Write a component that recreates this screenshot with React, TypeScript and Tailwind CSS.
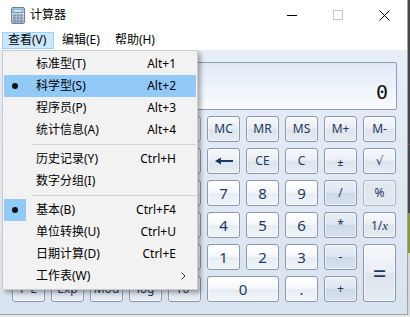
import React from "react";

const TXT = "text-[#1e395b]";

type Kind = "mem" | "num" | "op" | "pct" | "grp";

const KIND: Record<Kind, string> = {
  mem: "border-[#8a99ad] bg-[linear-gradient(to_bottom,#f6f8fb_0%,#e9eef5_49%,#dce4ee_51%,#e6ecf3_100%)]",
  num: "border-[#8a99ad] bg-[linear-gradient(to_bottom,#ffffff_0%,#f4f7fb_49%,#e7edf4_51%,#f0f4f9_100%)]",
  op: "border-[#8a99ad] bg-[linear-gradient(to_bottom,#e9eff7_0%,#dde6f0_49%,#cdd9e7_51%,#d8e2ed_100%)]",
  pct: "border-[#aab6c4] bg-[#e1e8f0]",
  grp: "border-[#a3b0c0] bg-[#e4ebf4]",
};

function Btn({
  children,
  kind = "mem",
  cls = "",
}: {
  children?: React.ReactNode;
  kind?: Kind;
  cls?: string;
}) {
  return (
    <div
      className={
        "flex items-center justify-center rounded-[3px] border shadow-[inset_0_0_0_1px_rgba(255,255,255,0.55)] " +
        TXT +
        " " +
        KIND[kind] +
        " " +
        cls
      }
    >
      {children}
    </div>
  );
}

const L = "text-[12px] leading-none";
const D = "text-[15px] leading-none";

function CalcIcon() {
  return (
    <svg width="14" height="17" viewBox="0 0 14 17">
      <defs>
        <linearGradient id="cb" x1="0" y1="0" x2="0" y2="1">
          <stop offset="0" stopColor="#e6edf5" />
          <stop offset="1" stopColor="#a9bbcf" />
        </linearGradient>
      </defs>
      <rect x="0.5" y="0.5" width="13" height="16" rx="1.5" fill="url(#cb)" stroke="#6c819a" />
      <rect x="2" y="2" width="10" height="3.5" fill="#c3e3fa" stroke="#5b86b2" strokeWidth="0.8" />
      {[0, 1, 2].map((r) =>
        [0, 1, 2].map((c) => (
          <rect
            key={r + "-" + c}
            x={2.2 + c * 3.4}
            y={7.4 + r * 2.9}
            width="2.6"
            height="2.1"
            fill="#7890aa"
          />
        ))
      )}
    </svg>
  );
}

function BackArrow() {
  return (
    <svg width="18" height="8" viewBox="0 0 18 8">
      <polygon points="0,4 6,0.5 6,7.5" fill="#1e395b" />
      <rect x="5" y="3" width="13" height="2" fill="#1e395b" />
    </svg>
  );
}

type Item =
  | { sep: true }
  | { sep?: false; label: string; sc?: string; checked?: boolean; hl?: boolean; sub?: boolean };

const ITEMS: Item[] = [
  { label: "标准型(T)", sc: "Alt+1" },
  { label: "科学型(S)", sc: "Alt+2", checked: true, hl: true },
  { label: "程序员(P)", sc: "Alt+3" },
  { label: "统计信息(A)", sc: "Alt+4" },
  { sep: true },
  { label: "历史记录(Y)", sc: "Ctrl+H" },
  { label: "数字分组(I)" },
  { sep: true },
  { label: "基本(B)", sc: "Ctrl+F4", checked: true },
  { label: "单位转换(U)", sc: "Ctrl+U" },
  { label: "日期计算(D)", sc: "Ctrl+E" },
  { label: "工作表(W)", sub: true },
];

function Menu() {
  return (
    <div className="absolute left-[2px] top-[50px] z-10 w-[196px] border border-[#cccccc] bg-[#f2f2f2] px-[1px] py-[2px] text-[12px] text-black shadow-[3px_3px_4px_rgba(0,0,0,0.3)]">
      {ITEMS.map((it, i) =>
        it.sep ? (
          <div key={i} className="flex h-[7px] items-center">
            <div className="ml-[28px] h-px flex-1 bg-[#d4d4d4]" />
          </div>
        ) : (
          <div
            key={i}
            className={
              "flex h-[22px] items-center leading-[22px] " + (it.hl ? "bg-[#91c9f7]" : "")
            }
          >
            <div
              className={
                "flex h-[22px] w-[22px] items-center justify-center " +
                (it.checked ? "bg-[#91c9f7]" : "")
              }
            >
              {it.checked && <div className="h-[6px] w-[6px] rounded-full bg-[#111111]" />}
            </div>
            <span className="ml-[10px]">{it.label}</span>
            {it.sc && <span className="ml-auto mr-[20px]">{it.sc}</span>}
            {it.sub && (
              <svg className="ml-auto mr-[10px]" width="5" height="8" viewBox="0 0 5 8">
                <polyline points="0.5,0.5 4,4 0.5,7.5" fill="none" stroke="#333" strokeWidth="1" />
              </svg>
            )}
          </div>
        )
      )}
    </div>
  );
}

export default function App() {
  return (
    <div className="flex h-[317px] w-[410px] flex-col overflow-hidden bg-[#e8e8e8] font-['Noto_Sans','Noto_Sans_CJK_SC',sans-serif]">
      <div className="flex h-[315px]">
        <div className="relative flex h-[315px] w-[408px] flex-col border-r border-b border-[#a3a3a3] bg-white">
          {/* title bar */}
          <div className="flex h-[30px] items-center">
            <div className="ml-[11px] mt-[1px]">
              <CalcIcon />
            </div>
            <span className="ml-[5px] text-[12px] leading-none text-black">计算器</span>
            <div className="ml-auto flex h-[30px]">
              <div className="flex w-[46px] items-center justify-center">
                <div className="h-px w-[10px] bg-black" />
              </div>
              <div className="flex w-[46px] items-center justify-center">
                <div className="h-[10px] w-[10px] border border-[#c4c4c4]" />
              </div>
              <div className="flex w-[46px] items-center justify-center">
                <svg width="11" height="11" viewBox="0 0 11 11">
                  <path d="M0.5 0.5 L10.5 10.5 M10.5 0.5 L0.5 10.5" stroke="#000" strokeWidth="1" />
                </svg>
              </div>
            </div>
          </div>
          {/* menu bar */}
          <div className="flex h-[20px] items-center text-[12px] leading-none text-black">
            <div className="ml-[2px] flex h-[17px] w-[52px] items-center border border-[#99d1ff] bg-[#cce8ff] pl-[5px]">
              查看(V)
            </div>
            <div className="ml-[2px] flex h-[17px] items-center px-[6px]">编辑(E)</div>
            <div className="ml-[3px] flex h-[17px] items-center px-[6px]">帮助(H)</div>
          </div>
          {/* body */}
          <div className="flex flex-1 flex-col bg-[linear-gradient(to_bottom,#e7eef8,#d9e3f0)] pl-[12px] pt-[12px]">
            <div className="flex h-[48px] w-[385px] justify-end rounded-[2px] border border-[#8e9cae] bg-[linear-gradient(to_bottom,#dfe9f6,#fbfdff)] pr-[8px] pt-[19px]">
              <span className="font-['DejaVu_Sans_Mono',monospace] text-[20px] leading-[20px] text-[#111111]">
                0
              </span>
            </div>
            <div className="mt-[6px] grid grid-cols-[repeat(10,33px)] grid-rows-[repeat(6,26px)] gap-[6px]">
              {/* row 1 */}
              <Btn kind="grp" cls="col-span-5" />
              <Btn cls={L}>MC</Btn>
              <Btn cls={L}>MR</Btn>
              <Btn cls={L}>MS</Btn>
              <Btn cls={L}>M+</Btn>
              <Btn cls={L}>M-</Btn>
              {/* row 2 (left side hidden under the menu) */}
              <div />
              <Btn />
              <Btn />
              <Btn />
              <Btn />
              <Btn>
                <BackArrow />
              </Btn>
              <Btn cls={L}>CE</Btn>
              <Btn cls={L}>C</Btn>
              <Btn cls="text-[11px] leading-none">±</Btn>
              <Btn cls="font-['DejaVu_Sans',sans-serif] text-[12px] leading-none">√</Btn>
              {/* row 3 */}
              <Btn />
              <Btn />
              <Btn />
              <Btn />
              <Btn />
              <Btn kind="num" cls={D}>7</Btn>
              <Btn kind="num" cls={D}>8</Btn>
              <Btn kind="num" cls={D}>9</Btn>
              <Btn kind="op" cls={L}>/</Btn>
              <Btn kind="pct" cls={L}>%</Btn>
              {/* row 4 */}
              <Btn />
              <Btn />
              <Btn />
              <Btn />
              <Btn />
              <Btn kind="num" cls={D}>4</Btn>
              <Btn kind="num" cls={D}>5</Btn>
              <Btn kind="num" cls={D}>6</Btn>
              <Btn kind="op" cls={L}>*</Btn>
              <Btn cls={L}>
                <span>
                  1/<i className="font-['Liberation_Serif',serif] text-[13px]">x</i>
                </span>
              </Btn>
              {/* row 5 */}
              <Btn />
              <Btn />
              <Btn />
              <Btn />
              <Btn />
              <Btn kind="num" cls={D}>1</Btn>
              <Btn kind="num" cls={D}>2</Btn>
              <Btn kind="num" cls={D}>3</Btn>
              <Btn kind="op" cls={L}>-</Btn>
              <Btn cls="row-span-2 text-[24px] leading-none">=</Btn>
              {/* row 6 */}
              <Btn cls={L}>F-E</Btn>
              <Btn cls={L}>Exp</Btn>
              <Btn cls={L}>Mod</Btn>
              <Btn cls={L}>log</Btn>
              <Btn cls={L}>10ˣ</Btn>
              <Btn kind="num" cls={"col-span-2 " + D}>0</Btn>
              <Btn kind="num" cls={D}>.</Btn>
              <Btn kind="op" cls={L}>+</Btn>
            </div>
          </div>
          <Menu />
        </div>
        <div className="flex w-[2px] flex-col">
          <div className="h-[144px] bg-[#474747]" />
          <div className="h-px bg-[#b03a2e]" />
          <div className="h-[68px] bg-[#474747]" />
          <div className="h-[40px] bg-[#8a9a2e]" />
          <div className="flex-1 bg-[#d8d8d8]" />
        </div>
      </div>
    </div>
  );
}
